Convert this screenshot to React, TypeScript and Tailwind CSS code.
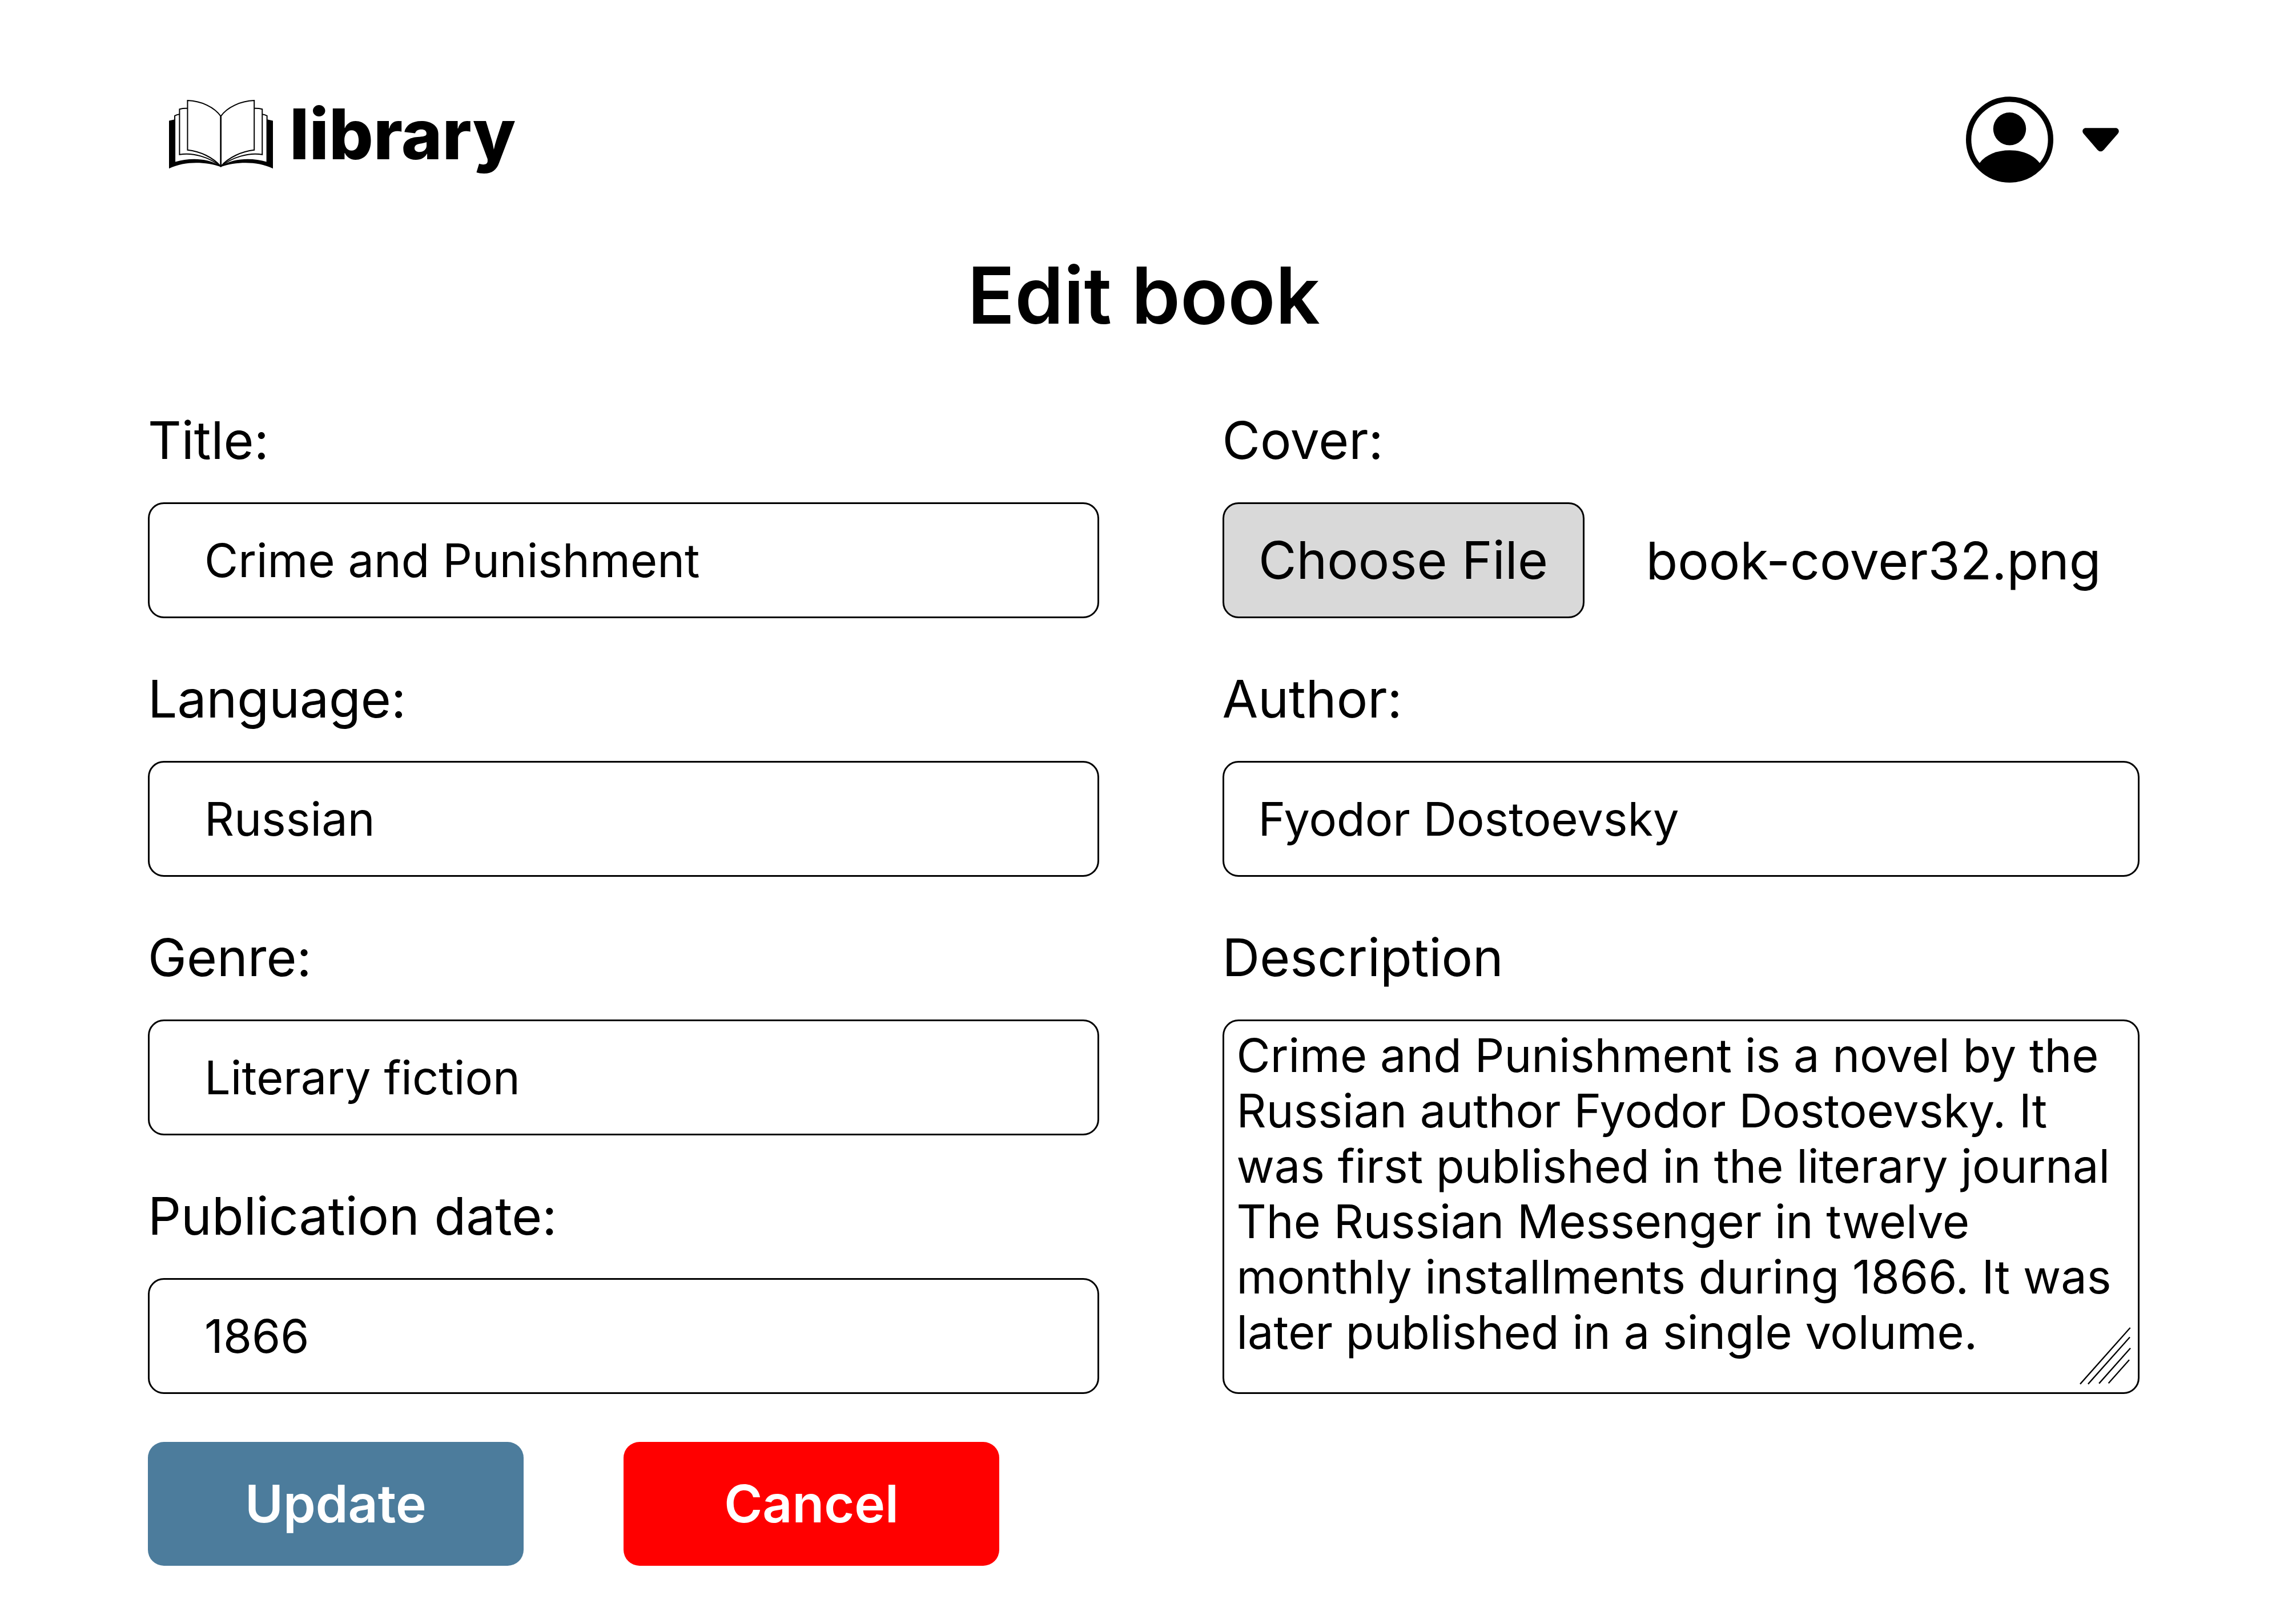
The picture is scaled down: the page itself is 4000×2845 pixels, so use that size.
import type { ReactNode } from 'react';

const BOX = 'rounded-[28px] border-[3px] border-black';

function BookLogo() {
  return (
    <svg viewBox="30 22 550 370" className="h-[124px] w-[184px] shrink-0" fill="none" stroke="#000" strokeWidth="6" aria-hidden="true">
      <path
        d="M66 129 L33 137 V387 C120 346 225 352 304 378 C383 352 490 346 577 387 V137 L544 129 V352 C470 330 375 330 304 374 C233 330 140 330 66 352 Z"
        fill="#000"
        stroke="none"
      />
      <path d="M87 103 Q74 104 63 111 V352 M521 103 Q534 104 546 111 V352" />
      <path d="M130 72 Q108 71 88 76 V314 C160 302 245 328 304 376 C363 328 450 302 521 314 V76 Q501 71 479 72" fill="none" />
      <path d="M130 31 C205 34 270 66 304 113 C338 66 405 34 479 31 V290 C415 297 345 328 304 376 C263 328 195 297 130 290 Z" fill="#fff" />
      <path d="M304 113 V378" strokeWidth="8" />
    </svg>
  );
}

function AvatarIcon() {
  return (
    <svg viewBox="125 87 458 451" className="h-[151px] w-[153px]" aria-hidden="true">
      <ellipse cx="354" cy="312.5" rx="215" ry="211.5" fill="none" stroke="#000" strokeWidth="28" />
      <circle cx="354" cy="256.5" r="86" />
      <path d="M196 436 C230 391 290 369 354 369 S478 391 512 436 L520 460 C480 510 420 537 354 537 S228 510 188 460 Z" />
    </svg>
  );
}

function CaretIcon() {
  return (
    <svg viewBox="736 245 195 128" className="h-[42px] w-[64px]" aria-hidden="true">
      <path d="M754 246 H913 C929 246 936 264 925 276 L850 362 Q833 380 816 362 L742 276 C731 264 738 246 754 246 Z" />
    </svg>
  );
}

function GripIcon() {
  return (
    <svg
      viewBox="240 130 272 305"
      className="pointer-events-none absolute right-[15px] bottom-[16px] h-[101px] w-[90px]"
      stroke="#000"
      strokeWidth="7"
      aria-hidden="true"
    >
      <path d="M243 431 L508 133 M285 431 L506 183 M343 428 L509 241 M393 427 L503 303" />
    </svg>
  );
}

function Field({ id, label, grow, children }: { id: string; label: string; grow?: boolean; children: ReactNode }) {
  return (
    <div className={grow ? 'flex flex-1 flex-col gap-[53px]' : 'flex flex-col gap-[53px]'}>
      <label htmlFor={id} className="text-[91px] leading-[112px]">
        {label}
      </label>
      {children}
    </div>
  );
}

function TextField({ id, label, value, narrow }: { id: string; label: string; value: string; narrow?: boolean }) {
  return (
    <Field id={id} label={label}>
      <input
        id={id}
        type="text"
        defaultValue={value}
        className={`${BOX} h-[203px] w-full bg-white text-[81px] ${narrow ? 'px-[60px]' : 'px-[96px]'}`}
      />
    </Field>
  );
}

const DESCRIPTION =
  'Crime and Punishment is a novel by the Russian author Fyodor Dostoevsky. It was first published in the literary journal The Russian Messenger in twelve monthly installments during 1866. It was later published in a single volume.';

export default function App() {
  return (
    <div className="flex min-h-screen flex-col gap-[131px] bg-white pt-[169px] pr-[253px] pb-[102px] pl-[259px] font-['Inter',sans-serif] text-black">
      <header className="flex items-start justify-between px-9">
        <a href="#" className="mt-1 flex items-center gap-7">
          <BookLogo />
          <span className="text-[122px] leading-[124px] font-extrabold">library</span>
        </a>
        <button type="button" aria-label="Account menu" className="flex items-center gap-[51px]">
          <AvatarIcon />
          <CaretIcon />
        </button>
      </header>

      <h1 className="text-center text-[137px] leading-[133px] font-semibold">Edit book</h1>

      <form className="flex flex-col gap-[84px]">
        <div className="grid grid-cols-[1665fr_1606fr] gap-x-[216px]">
          <div className="flex flex-col gap-[85px]">
            <TextField id="title" label="Title:" value="Crime and Punishment" />
            <TextField id="language" label="Language:" value="Russian" />
            <TextField id="genre" label="Genre:" value="Literary fiction" />
            <TextField id="date" label="Publication date:" value="1866" />
          </div>
          <div className="flex flex-col gap-[85px]">
            <Field id="cover" label="Cover:">
              <div className="flex items-center gap-[108px]">
                <button id="cover" type="button" className={`${BOX} h-[203px] w-[634px] shrink-0 bg-[#d9d9d9] text-[91px]`}>
                  Choose File
                </button>
                <span className="text-[91px] leading-[112px]">book-cover32.png</span>
              </div>
            </Field>
            <TextField id="author" label="Author:" value="Fyodor Dostoevsky" narrow />
            <Field id="description" label="Description" grow>
              <div className="relative flex flex-1">
                <textarea
                  id="description"
                  defaultValue={DESCRIPTION}
                  className={`${BOX} w-full resize-none overflow-hidden bg-white px-[22px] py-3 text-[81px] leading-[97px]`}
                />
                <GripIcon />
              </div>
            </Field>
          </div>
        </div>
        <div className="flex gap-[175px]">
          <button type="submit" className="h-[217px] w-[658px] rounded-[28px] bg-[#4c7c9c] text-[91px] font-semibold text-white">
            Update
          </button>
          <button type="button" className="h-[217px] w-[658px] rounded-[28px] bg-[#ff0000] text-[91px] font-semibold text-white">
            Cancel
          </button>
        </div>
      </form>
    </div>
  );
}
